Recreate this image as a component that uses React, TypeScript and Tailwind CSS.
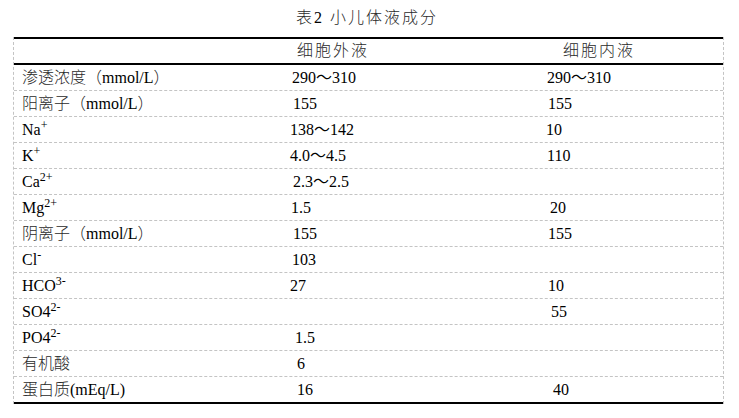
import type { ReactNode } from 'react';

type Row = {
    label: ReactNode;
    a?: string;
    aPad: string;
    b?: string;
    bPad: string;
};

const Cn = ({ children }: { children: ReactNode }) => (
    <span className="font-light text-[#2a2a2a]">{children}</span>
);

const Sup = ({ children }: { children: ReactNode }) => (
    <sup className="text-[12px] top-[-0.5em]">{children}</sup>
);

const rows: Row[] = [
    { label: <><Cn>渗透浓度（</Cn>mmol/L<Cn>）</Cn></>, a: '290～310', aPad: 'pl-[2px]', b: '290～310', bPad: 'pl-[1px]' },
    { label: <><Cn>阳离子（</Cn>mmol/L<Cn>）</Cn></>, a: '155', aPad: 'pl-[3px]', b: '155', bPad: 'pl-[2px]' },
    { label: <>Na<Sup>+</Sup></>, a: '138～142', aPad: 'pl-[0px]', b: '10', bPad: 'pl-[0px]' },
    { label: <>K<Sup>+</Sup></>, a: '4.0～4.5', aPad: 'pl-[0px]', b: '110', bPad: 'pl-[1px]' },
    { label: <>Ca<Sup>2+</Sup></>, a: '2.3～2.5', aPad: 'pl-[3px]', bPad: '' },
    { label: <>Mg<Sup>2+</Sup></>, a: '1.5', aPad: 'pl-[1px]', b: '20', bPad: 'pl-[4px]' },
    { label: <><Cn>阴离子（</Cn>mmol/L<Cn>）</Cn></>, a: '155', aPad: 'pl-[3px]', b: '155', bPad: 'pl-[2px]' },
    { label: <>Cl<Sup>-</Sup></>, a: '103', aPad: 'pl-[2px]', bPad: '' },
    { label: <>HCO<Sup>3-</Sup></>, a: '27', aPad: 'pl-[0px]', b: '10', bPad: 'pl-[2px]' },
    { label: <>SO4<Sup>2-</Sup></>, aPad: '', b: '55', bPad: 'pl-[5px]' },
    { label: <>PO4<Sup>2-</Sup></>, a: '1.5', aPad: 'pl-[5px]', bPad: '' },
    { label: <Cn>有机酸</Cn>, a: '6', aPad: 'pl-[7px]', bPad: '' },
    { label: <><Cn>蛋白质</Cn>(mEq/L)</>, a: '16', aPad: 'pl-[7px]', b: '40', bPad: 'pl-[7px]' },
];

export default function App() {
    return (
        <div
            className="w-[739px] h-[418px] bg-white text-[16px] text-black"
            style={{ fontFamily: '"Liberation Serif", "Noto Sans CJK SC", serif' }}
        >
            <div className="h-[37px] flex items-center pl-[296px] pb-[1px] whitespace-pre tracking-[2px]">
                <Cn>表</Cn>2 <Cn>小儿体液成分</Cn>
            </div>

            <div className="ml-[13px] w-[711px] border-x border-dashed border-[#c4c4c4]">
                <div className="flex h-[28px] items-center border-y-2 border-black tracking-[2px]">
                    <div className="w-[276px]" />
                    <div className="w-[256px] pl-[7px]"><Cn>细胞外液</Cn></div>
                    <div className="flex-1 pl-[17px]"><Cn>细胞内液</Cn></div>
                </div>

                {rows.map((r, i) => (
                    <div
                        key={i}
                        className={
                            i === rows.length - 1
                                ? 'flex h-[27px] items-center border-b-2 border-black'
                                : 'flex h-[26px] items-center border-b border-dashed border-[#c4c4c4]'
                        }
                    >
                        <div className="w-[276px] pl-[8px] whitespace-nowrap">{r.label}</div>
                        <div className={`w-[256px] whitespace-nowrap ${r.aPad}`}>{r.a}</div>
                        <div className={`flex-1 whitespace-nowrap ${r.bPad}`}>{r.b}</div>
                    </div>
                ))}
            </div>
        </div>
    );
}
